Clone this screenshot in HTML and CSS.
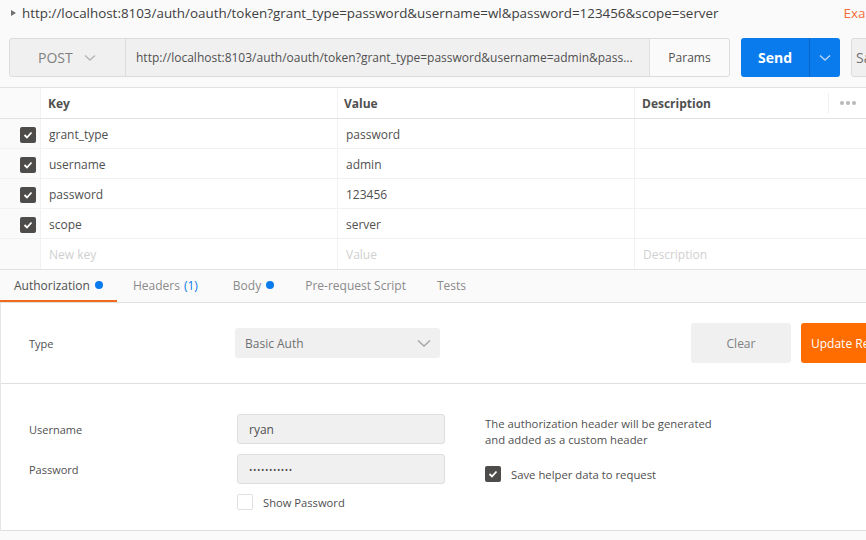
FILE: index.html
```html
<!DOCTYPE html>
<html>
<head>
<meta charset="utf-8">
<link rel="stylesheet" href="styles.css">
</head>
<body>
<div class="title">
  <span class="tri"></span>
  <span class="title-text">http://localhost:8103/auth/oauth/token?grant_type=password&amp;username=wl&amp;password=123456&amp;scope=server</span>
  <span class="examples">Examples</span>
</div>

<div class="reqbar">
  <div class="reqbox">
    <div class="method">POST
      <svg class="chev" width="12" height="8" viewBox="0 0 12 8"><polyline points="1,1.5 6,6 11,1.5" fill="none" stroke="#b5b5b5" stroke-width="1.4"/></svg>
    </div>
    <div class="url">http://localhost:8103/auth/oauth/token?grant_type=password&amp;username=admin&amp;pass...</div>
    <div class="params">Params</div>
  </div>
  <div class="send">
    <span class="send-main">Send</span>
    <span class="send-drop"><svg width="12" height="8" viewBox="0 0 12 8"><polyline points="1,1.5 6,6 11,1.5" fill="none" stroke="#b8d6f7" stroke-width="1.4"/></svg></span>
  </div>
  <div class="save">Save</div>
</div>

<div class="table">
  <div class="row head">
    <div class="c0"></div>
    <div class="c1">Key</div>
    <div class="c2">Value</div>
    <div class="c3">Description<span class="more"><i></i><i></i><i></i></span></div>
  </div>
  <div class="row">
    <div class="c0"><span class="cb"><svg width="10" height="8" viewBox="0 0 10 8"><polyline points="1.5,4 4,6.5 8.5,1.5" fill="none" stroke="#fff" stroke-width="1.8"/></svg></span></div>
    <div class="c1">grant_type</div><div class="c2">password</div><div class="c3"></div>
  </div>
  <div class="row">
    <div class="c0"><span class="cb"><svg width="10" height="8" viewBox="0 0 10 8"><polyline points="1.5,4 4,6.5 8.5,1.5" fill="none" stroke="#fff" stroke-width="1.8"/></svg></span></div>
    <div class="c1">username</div><div class="c2">admin</div><div class="c3"></div>
  </div>
  <div class="row">
    <div class="c0"><span class="cb"><svg width="10" height="8" viewBox="0 0 10 8"><polyline points="1.5,4 4,6.5 8.5,1.5" fill="none" stroke="#fff" stroke-width="1.8"/></svg></span></div>
    <div class="c1">password</div><div class="c2">123456</div><div class="c3"></div>
  </div>
  <div class="row">
    <div class="c0"><span class="cb"><svg width="10" height="8" viewBox="0 0 10 8"><polyline points="1.5,4 4,6.5 8.5,1.5" fill="none" stroke="#fff" stroke-width="1.8"/></svg></span></div>
    <div class="c1">scope</div><div class="c2">server</div><div class="c3"></div>
  </div>
  <div class="row last">
    <div class="c0"></div>
    <div class="c1 ph">New key</div><div class="c2 ph">Value</div><div class="c3 ph">Description</div>
  </div>
</div>

<div class="tabs">
  <div class="tab active">Authorization <span class="dot"></span></div>
  <div class="tab headers">Headers <span class="blue">(1)</span></div>
  <div class="tab">Body <span class="dot"></span></div>
  <div class="tab">Pre-request Script</div>
  <div class="tab">Tests</div>
</div>

<div class="auth">
  <div class="type-row">
    <div class="label">Type</div>
    <div class="select">Basic Auth
      <svg width="14" height="9" viewBox="0 0 14 9"><polyline points="1,1.5 7,7 13,1.5" fill="none" stroke="#a5a5a5" stroke-width="1.4"/></svg>
    </div>
    <div class="spacer"></div>
    <div class="btn clear">Clear</div>
    <div class="btn update">Update Request</div>
  </div>
  <div class="cred">
    <div class="cred-left">
      <div class="field-row">
        <div class="flabel">Username</div>
        <div class="input">ryan</div>
      </div>
      <div class="field-row">
        <div class="flabel">Password</div>
        <div class="input dots">•••••••••••</div>
      </div>
      <div class="show-row">
        <span class="cb empty"></span>
        <span class="show-label">Show Password</span>
      </div>
    </div>
    <div class="cred-right">
      <p class="note">The authorization header will be generated<br>and added as a custom header</p>
      <div class="save-helper">
        <span class="cb"><svg width="10" height="8" viewBox="0 0 10 8"><polyline points="1.5,4 4,6.5 8.5,1.5" fill="none" stroke="#fff" stroke-width="1.8"/></svg></span>
        <span>Save helper data to request</span>
      </div>
    </div>
  </div>
</div>
<div class="footer"></div>
</body>
</html>
```
FILE: styles.css
```css
* { box-sizing: border-box; }
html, body { margin: 0; padding: 0; }
body {
  width: 866px;
  height: 540px;
  overflow: hidden;
  background: #fafafa;
  font-family: "Open Sans", "Liberation Sans", sans-serif;
  font-size: 12px;
  color: #505050;
}
.title {
  height: 26px;
  display: flex;
  align-items: center;
  padding-left: 11px;
  white-space: nowrap;
  overflow: hidden;
}
.tri {
  width: 0; height: 0;
  border-top: 3.5px solid transparent;
  border-bottom: 3.5px solid transparent;
  border-left: 5px solid #707070;
  margin-right: 6px;
  flex: none;
}
.title-text { font-size: 13.4px; color: #404040; flex: none; }
.examples { margin-left: 125px; font-size: 13.4px; color: #f26b3a; flex: none; }

.reqbar {
  display: flex;
  margin-top: 12px;
  padding-left: 9px;
  height: 39px;
  gap: 11px;
  white-space: nowrap;
}
.reqbar > * { flex: none; }
.reqbox {
  display: flex;
  width: 721px;
  border: 1px solid #dcdcdc;
  border-radius: 3px;
  background: #f0f0f0;
}
.method {
  width: 115px;
  display: flex;
  align-items: center;
  padding-left: 28px;
  font-size: 14px;
  color: #808080;
}
.method .chev { margin-left: 11px; }
.url {
  width: 524px;
  border-left: 1px solid #dcdcdc;
  display: flex;
  align-items: center;
  padding-left: 10px;
  font-size: 12px;
  color: #505050;
  overflow: hidden;
}
.params {
  flex: 1;
  background: #fafafa;
  border-left: 1px solid #e0e0e0;
  border-radius: 0 3px 3px 0;
  display: flex;
  align-items: center;
  justify-content: center;
  font-size: 12px;
  color: #505050;
}
.send {
  width: 99px;
  display: flex;
  background: #097bed;
  border-radius: 3px;
  color: #fff;
}
.send-main {
  width: 69px;
  display: flex;
  align-items: center;
  justify-content: center;
  font-weight: 700;
  font-size: 14px;
  border-right: 1px solid #0a66c2;
}
.send-drop { flex: 1; display: flex; align-items: center; justify-content: center; }
.save {
  width: 60px;
  border: 1px solid #dcdcdc;
  border-radius: 3px;
  background: #f0f0f0;
  display: flex;
  align-items: center;
  padding-left: 4px;
  font-size: 14px;
  color: #707070;
}

.table {
  margin-top: 10px;
  border-top: 1px solid #e2e2e2;
}
.row {
  display: grid;
  grid-template-columns: 40px 297px 297px 1fr;
  height: 30px;
  border-bottom: 1px solid #f2f2f2;
  background: #fff;
}
.row.head { height: 31px; border-bottom: 1px solid #e2e2e2; font-weight: 700; }
.row.last { height: 31px; border-bottom: 1px solid #e2e2e2; }
.row > div {
  display: flex;
  align-items: center;
  padding-left: 8px;
  padding-top: 2px;
  border-left: 1px solid #f2f2f2;
}
.row.head > div, .row.last > div { padding-top: 0; }
.row > .c0 { background: #fafafa; border-left: none; padding-left: 20px; }
.row.head > .c1 { padding-left: 7px; }
.row.head > .c2 { padding-left: 6px; }
.row.head > .c3 { padding-left: 7px; }
.row.head > div { color: #505050; }
.more {
  margin-left: auto;
  height: 20px;
  width: 38px;
  border-left: 1px solid #f0f0f0;
  display: flex;
  align-items: center;
  justify-content: center;
  gap: 2px;
}
.more i { width: 4px; height: 4px; border-radius: 50%; background: #b8b8b8; display: block; }
.ph { color: #d0d0d0; }
.cb {
  width: 16px; height: 16px;
  border-radius: 2px;
  background: #4e4c4a;
  display: inline-flex;
  align-items: center;
  justify-content: center;
  flex: none;
}
.cb.empty { background: #fff; border: 1px solid #e0e0e0; }

.tabs {
  height: 33px;
  display: flex;
  align-items: stretch;
  border-bottom: 1px solid #e0e0e0;
}
.tab {
  display: flex;
  align-items: center;
  padding: 0 15px 2px;
  color: #8a8a8a;
  font-size: 12px;
  margin-right: 1px;
}
.tab.headers { margin-right: 5px; }
.tab.active {
  color: #505050;
  border-bottom: 2px solid #f26b1d;
  padding: 0 14px;
}
.dot { width: 8px; height: 8px; border-radius: 50%; background: #097bed; display: inline-block; margin-left: 5px; }
.blue { color: #097bed; margin-left: 4px; }

.auth { background: #fff; border-left: 1px solid #e6e6e6; }
.type-row {
  height: 81px;
  display: flex;
  align-items: center;
  padding-left: 28px;
  border-bottom: 1px solid #e0e0e0;
}
.label { width: 206px; font-size: 11px; color: #505050; }
.select {
  width: 205px;
  height: 30px;
  background: #f0f0f0;
  border-radius: 3px;
  display: flex;
  align-items: center;
  justify-content: space-between;
  padding: 0 9px 0 10px;
  color: #707070;
  flex: none;
}
.spacer { flex: 1; }
.btn {
  height: 40px;
  border-radius: 3px;
  display: flex;
  align-items: center;
  justify-content: center;
  font-size: 12px;
  flex: none;
}
.clear { width: 100px; background: #f0f0f0; color: #808080; margin-right: 10px; }
.update { width: 65px; background: #ff6c00; color: #fff; justify-content: flex-start; padding-left: 10px; white-space: nowrap; overflow: hidden; border-radius: 3px 0 0 3px; }

.cred {
  height: 147px;
  display: flex;
  padding: 30px 0 0 28px;
  border-bottom: 1px solid #e0e0e0;
}
.cred-left { width: 456px; flex: none; }
.field-row { display: flex; align-items: center; height: 30px; margin-bottom: 10px; }
.flabel { width: 208px; color: #505050; font-size: 11px; }
.input {
  width: 208px;
  height: 30px;
  background: #f0f0f0;
  border: 1px solid #dedede;
  border-radius: 3px;
  display: flex;
  align-items: center;
  padding-left: 11px;
  color: #505050;
}
.input.dots { font-size: 9px; letter-spacing: 0.6px; }
.show-row { display: flex; align-items: center; margin-left: 208px; }
.show-label { margin-left: 10px; color: #505050; font-size: 11.2px; }
.note { margin: 0; padding-top: 2px; line-height: 16px; color: #505050; font-size: 11.3px; }
.save-helper { display: flex; align-items: center; gap: 10px; margin-top: 18px; font-size: 11.3px; }
.footer { height: 10px; background: #fafafa; }
```
